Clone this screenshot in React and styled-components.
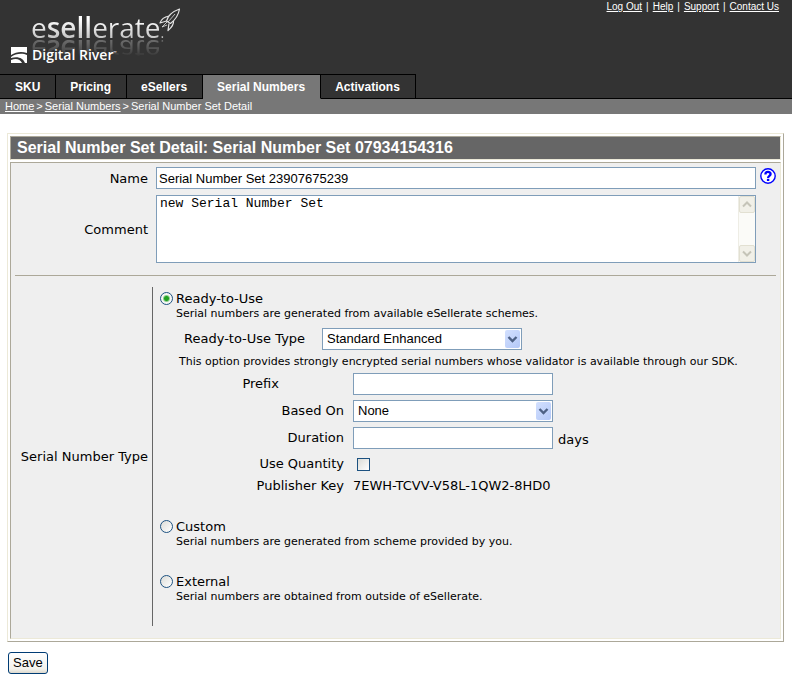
import React from "react";
import styled, { createGlobalStyle } from "styled-components";

const sans = `"Liberation Sans", Arial, sans-serif`;
const wide = `"DejaVu Sans", Verdana, sans-serif`;
const mono = `"Liberation Mono", "Courier New", monospace`;

const GlobalStyle = createGlobalStyle`
  *, *::before, *::after { box-sizing: border-box; }
  body { margin: 0; background: #fff; color: #000; font: 13px/16px ${wide}; }
`;

const Header = styled.header`
  background: #333;
  color: #fff;
`;

const Masthead = styled.div`
  display: flex;
  justify-content: space-between;
  align-items: flex-start;
  height: 74px;
  padding-right: 13px;
`;

const Brand = styled.div`
  padding: 8px 0 0 11px;
`;

const WordmarkRow = styled.div`
  display: flex;
  align-items: flex-start;
  padding-left: 20px;
`;

const Wordmark = styled.div`
  font: 400 28px/38px "Open Sans", "Noto Sans", sans-serif;
  background: linear-gradient(#fff 30%, #bdbdbd 85%);
  background-clip: text;
  color: transparent;
  -webkit-box-reflect: below -14px linear-gradient(transparent 35%, rgba(255, 255, 255, 0.4) 80%);
  b { font-weight: 600; }
  small { font-size: 14px; line-height: 14px; }
`;

const Rocket = styled.svg`
  width: 22px;
  height: 24px;
  margin-left: -5px;
`;

const Company = styled.div`
  display: flex;
  align-items: center;
  gap: 5px;
  position: relative;
  font: 600 14px/18px "Open Sans", "Noto Sans", sans-serif;
  sup { font-size: 4px; line-height: 4px; }
`;

const Account = styled.nav`
  font: 10px/14px ${sans};
  display: flex;
  gap: 4px;
`;

const PlainLink = styled.a`
  color: #fff;
  text-decoration: underline;
`;

const Tabs = styled.nav`
  display: flex;
  border-bottom: 1px solid #000;
`;

const Tab = styled.a`
  flex: none;
  height: 25px;
  margin-bottom: -1px;
  padding: 0 15px 0 14px;
  border: 1px solid #000;
  border-left: 0;
  border-bottom-color: ${(p) => (p.$active ? "#777" : "#000")};
  background: ${(p) => (p.$active ? "#777" : "#333")};
  color: #fff;
  font: bold 12px/24px ${sans};
  text-decoration: none;
  &:first-child { padding-left: 15px; }
`;

const Crumbs = styled.nav`
  display: flex;
  gap: 2px;
  padding: 0 5px;
  background: #777;
  color: #fff;
  font: 11px/15px ${sans};
`;

const Main = styled.main`
  padding: 19px 8px 0 7px;
`;

const Panel = styled.section`
  padding: 2px;
  border: 1px solid;
  border-color: #ece9d8 #aca899 #aca899 #ece9d8;
`;

const Title = styled.h1`
  margin: 0 0 2px;
  padding: 0 6px;
  border: 1px solid;
  border-color: #aca899 #ece9d8 #ece9d8 #aca899;
  background: #666;
  color: #fff;
  font: bold 16px/22px ${sans};
`;

const Body = styled.div`
  padding: 4px 4px 12px;
  border: 1px solid;
  border-color: #aca899 #ece9d8 #ece9d8 #aca899;
  background: #efefef;
`;

const FieldRow = styled.div`
  display: grid;
  grid-template-columns: 133px 1fr 12px;
  column-gap: 8px;
  align-items: center;
  margin-bottom: 6px;
`;

const FieldLabel = styled.label`
  padding-top: 2px;
  text-align: right;
`;

const TextInput = styled.input`
  width: ${(p) => (p.$full ? "100%" : "200px")};
  height: 22px;
  padding: 0 2px;
  border: 1px solid #7f9db9;
  border-radius: 0;
  background: #fff;
  font: 13px/20px ${sans};
`;

const CommentBox = styled.div`
  display: grid;
  position: relative;
`;

const CommentInput = styled.textarea`
  height: 68px;
  padding: 0 20px 0 3px;
  border: 1px solid #7f9db9;
  background: #fff;
  font: 13px/16px ${mono};
  resize: none;
  overflow: hidden;
`;

const Scrollbar = styled.div`
  position: absolute;
  inset: 1px 1px 1px auto;
  width: 17px;
  display: flex;
  flex-direction: column;
  justify-content: space-between;
  background: #fbfbf8;
  border-left: 1px solid #eeede5;
`;

const ScrollArrow = styled.svg`
  width: 16px;
  height: 17px;
  border: 1px solid #e2e0d2;
  border-radius: 2px;
  background: #f1f0e8;
`;

const HelpLink = styled.a`
  display: grid;
  width: 16px;
  height: 16px;
  margin: -4px 0 0 -4px;
`;

const Rule = styled.hr`
  margin: 12px 0 11px;
  border: 0;
  border-top: 1px solid #aca899;
`;

const TypeRow = styled.div`
  display: grid;
  grid-template-columns: 133px 1fr;
  column-gap: 4px;
  align-items: center;
`;

const TypeLabel = styled.span`
  text-align: right;
`;

const Options = styled.div`
  padding: 4px 0 22px 7px;
  border-left: 1px solid #666;
`;

const Option = styled.div`
  margin-bottom: ${(p) => (p.$last ? "0" : "25px")};
`;

const OptionLabel = styled.label`
  display: flex;
  align-items: center;
  gap: 3px;
`;

const Radio = styled.input`
  appearance: none;
  width: 13px;
  height: 13px;
  margin: 0 0 2px;
  border: 1px solid #1d5281;
  border-radius: 50%;
  background: linear-gradient(135deg, #dcdcd7, #fff);
  &:checked {
    background: radial-gradient(circle, #21a121 0 2px, #8fd08f 3px, #f6f6f4 4px);
  }
`;

const Note = styled.p`
  margin: 0 0 0 ${(p) => (p.$deep ? "19px" : "16px")};
  font-size: 11px;
  line-height: 14px;
`;

const SelectRow = styled.div`
  display: grid;
  grid-template-columns: 130px 1fr;
  align-items: center;
  gap: 8px;
  margin: 7px 0 5px 24px;
`;

const SelectBox = styled.div`
  display: inline-grid;
  position: relative;
  width: 200px;
`;

const Select = styled.select`
  appearance: none;
  height: 22px;
  padding: 0 20px 0 4px;
  border: 1px solid #7f9db9;
  border-radius: 0;
  background: #fff;
  color: #000;
  font: 13px/20px ${sans};
`;

const SelectArrow = styled.svg`
  position: absolute;
  top: 2px;
  right: 2px;
  width: 15px;
  height: 18px;
  border-radius: 2px;
  background: linear-gradient(135deg, #d3e0fe, #b3c8f8);
  pointer-events: none;
`;

const Settings = styled.div`
  display: grid;
  grid-template-columns: 184px 1fr;
  column-gap: 9px;
  row-gap: 5px;
  align-items: center;
  margin-top: 4px;
`;

const SettingLabel = styled.label`
  text-align: right;
  padding-right: ${(p) => (p.$inset ? "65px" : "0")};
`;

const Unit = styled.span`
  padding: 4px 0 0 5px;
`;

const Control = styled.div`
  display: flex;
  align-items: center;
`;

const Facts = styled(Settings)`
  margin-top: 7px;
  row-gap: 6px;
`;

const Checkbox = styled.input`
  appearance: none;
  width: 13px;
  height: 13px;
  margin: 0 4px;
  border: 1px solid #1c5180;
  background: linear-gradient(135deg, #dcdcd7, #fff);
  &:checked { background: #21a121; }
`;

const SaveButton = styled.button`
  display: block;
  height: 22px;
  margin: 10px 0 4px 1px;
  padding: 0 4px;
  border: 1px solid #003c74;
  border-radius: 3px;
  background: linear-gradient(#fff, #f3f2ec 80%, #dcd8ce);
  color: #000;
  font: 13px/20px ${sans};
`;

const Dropdown = ({ id, options }) => (
  <SelectBox>
    <Select id={id}>
      {options.map((o) => <option key={o}>{o}</option>)}
    </Select>
    <SelectArrow viewBox="0 0 15 18" aria-hidden="true">
      <path d="M3.5 7l4 4 4-4" fill="none" stroke="#4d6185" strokeWidth="2.4" />
    </SelectArrow>
  </SelectBox>
);

const tabs = ["SKU", "Pricing", "eSellers", "Serial Numbers", "Activations"];
const account = ["Log Out", "Help", "Support", "Contact Us"];

export default function App() {
  return (
    <>
      <GlobalStyle />
      <Header>
        <Masthead>
          <Brand>
            <WordmarkRow>
              <Wordmark>e<b>sell</b>erate<small>.</small></Wordmark>
              <Rocket viewBox="0 0 22 24" aria-hidden="true" fill="none" stroke="#e4e4e4" strokeWidth="1.2" strokeLinejoin="round">
                <path d="M20.5 1C15 3 9 7 7.5 13l4 2.5C16 12 19.5 7 20.5 1z" />
                <path d="M10 8C5 9 2 12 1 15l6.500-2M14.500 13c.5 4-2.500 7-5.500 9.500l1-7" />
                <path d="M16 6L9 14M8 14l-5 5 5-2" strokeWidth="0.8" />
              </Rocket>
            </WordmarkRow>
            <Company>
              <svg width="16" height="16" viewBox="0 0 16 16" aria-hidden="true" fill="#fff">
                <path d="M0 0h16v6C10 4 5 5 0 8z" />
                <path d="M0 10C5 6 12 6 16 8v8h-2C12 11 7 9 0 11z" />
                <path d="M0 13c5-2 9-1 11 3H0z" />
              </svg>
              <span>Digital River<sup>™</sup></span>
            </Company>
          </Brand>
          <Account aria-label="Account">
            {account.map((name, i) => (
              <React.Fragment key={name}>
                {i > 0 && <span>|</span>}
                <PlainLink href="#">{name}</PlainLink>
              </React.Fragment>
            ))}
          </Account>
        </Masthead>
        <Tabs aria-label="Sections">
          {tabs.map((name) => (
            <Tab key={name} href="#" $active={name === "Serial Numbers"}>{name}</Tab>
          ))}
        </Tabs>
        <Crumbs aria-label="Breadcrumb">
          <PlainLink href="#">Home</PlainLink>
          <span>&gt;</span>
          <PlainLink href="#">Serial Numbers</PlainLink>
          <span>&gt;</span>
          <span>Serial Number Set Detail</span>
        </Crumbs>
      </Header>
      <Main>
        <Panel>
          <Title>Serial Number Set Detail: Serial Number Set 07934154316</Title>
          <Body>
            <FieldRow>
              <FieldLabel htmlFor="name">Name</FieldLabel>
              <TextInput id="name" $full defaultValue="Serial Number Set 23907675239" />
              <HelpLink href="#" aria-label="Help">
                <svg width="16" height="16" viewBox="0 0 16 16" aria-hidden="true" fill="none" stroke="#00f">
                  <circle cx="8" cy="8" r="7.2" strokeWidth="1.4" fill="#fff" />
                  <path d="M5.4 6.4C5.4 3.2 10.6 3.2 10.6 6.1c0 1.8-2.5 1.8-2.5 3.8" strokeWidth="2.3" />
                  <path d="M8.1 10.8v2.2" strokeWidth="2.4" />
                </svg>
              </HelpLink>
            </FieldRow>
            <FieldRow>
              <FieldLabel htmlFor="comment">Comment</FieldLabel>
              <CommentBox>
                <CommentInput id="comment" defaultValue="new Serial Number Set" />
                <Scrollbar aria-hidden="true">
                  <ScrollArrow viewBox="0 0 14 15"><path d="M3 9.5l4-4 4 4" fill="none" stroke="#c5c4b8" strokeWidth="2" /></ScrollArrow>
                  <ScrollArrow viewBox="0 0 14 15"><path d="M3 5.5l4 4 4-4" fill="none" stroke="#c5c4b8" strokeWidth="2" /></ScrollArrow>
                </Scrollbar>
              </CommentBox>
            </FieldRow>
            <Rule />
            <TypeRow role="radiogroup" aria-labelledby="type-label">
              <TypeLabel id="type-label">Serial Number Type</TypeLabel>
              <Options>
                <Option>
                  <OptionLabel><Radio type="radio" name="type" defaultChecked />Ready-to-Use</OptionLabel>
                  <Note>Serial numbers are generated from available eSellerate schemes.</Note>
                  <SelectRow>
                    <label htmlFor="ready-type">Ready-to-Use Type</label>
                    <Dropdown id="ready-type" options={["Standard Enhanced"]} />
                  </SelectRow>
                  <Note $deep>This option provides strongly encrypted serial numbers whose validator is available through our SDK.</Note>
                  <Settings>
                    <SettingLabel htmlFor="prefix" $inset>Prefix</SettingLabel>
                    <Control><TextInput id="prefix" /></Control>
                    <SettingLabel htmlFor="based-on">Based On</SettingLabel>
                    <Control><Dropdown id="based-on" options={["None"]} /></Control>
                    <SettingLabel htmlFor="duration">Duration</SettingLabel>
                    <Control><TextInput id="duration" /><Unit>days</Unit></Control>
                  </Settings>
                  <Facts>
                    <SettingLabel htmlFor="quantity">Use Quantity</SettingLabel>
                    <Control><Checkbox id="quantity" type="checkbox" /></Control>
                    <SettingLabel as="span">Publisher Key</SettingLabel>
                    <span>7EWH-TCVV-V58L-1QW2-8HD0</span>
                  </Facts>
                </Option>
                <Option>
                  <OptionLabel><Radio type="radio" name="type" />Custom</OptionLabel>
                  <Note>Serial numbers are generated from scheme provided by you.</Note>
                </Option>
                <Option $last>
                  <OptionLabel><Radio type="radio" name="type" />External</OptionLabel>
                  <Note>Serial numbers are obtained from outside of eSellerate.</Note>
                </Option>
              </Options>
            </TypeRow>
          </Body>
        </Panel>
        <SaveButton type="button">Save</SaveButton>
      </Main>
    </>
  );
}
